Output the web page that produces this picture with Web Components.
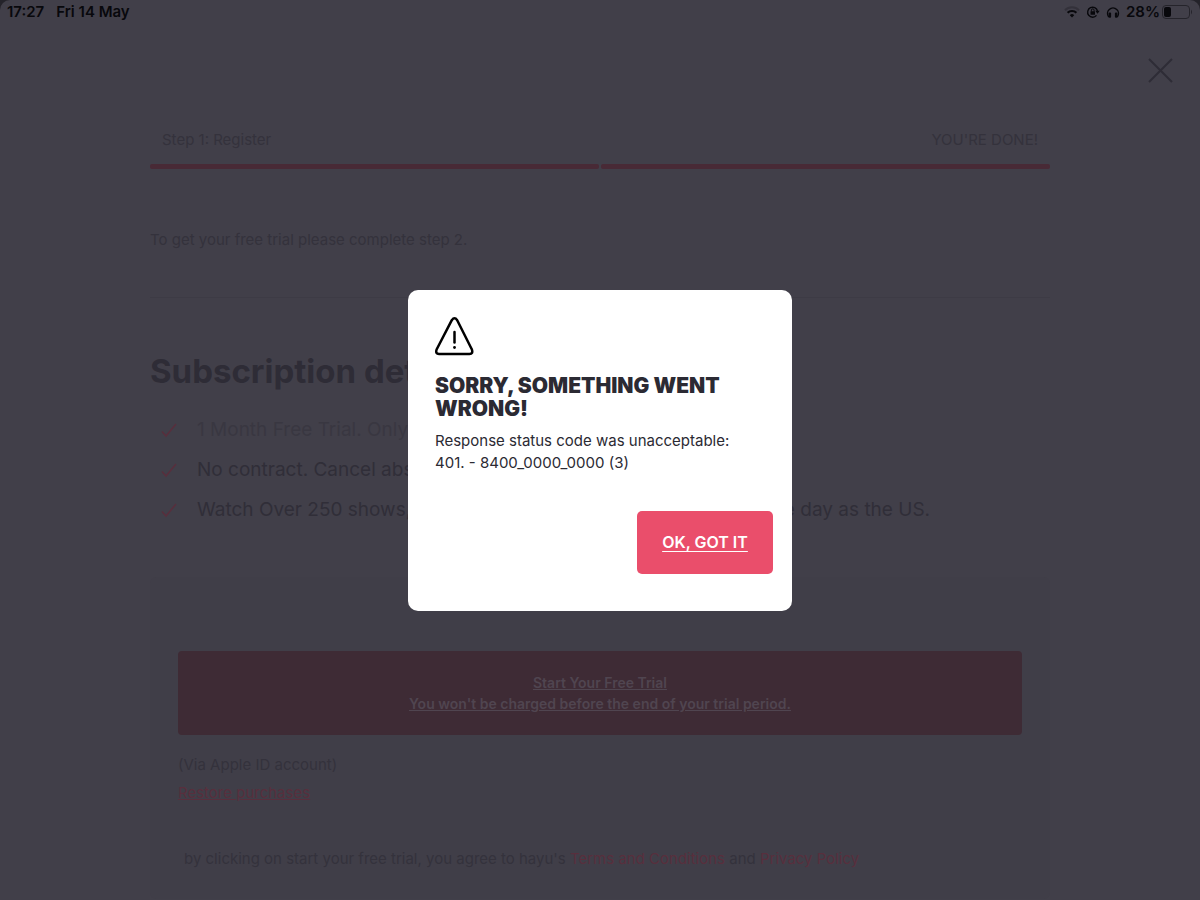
<!DOCTYPE html>
<html lang="en">
<head>
<meta charset="utf-8">
<meta name="viewport" content="width=device-width, initial-scale=1">
<title>hayu</title>
<style>
  :root {
    --page: #413f49;
    --muted: #34323c;
    --ink: #2e2c36;
    --accent: #582f3d;
    --panel: #3e2b35;
    --pink: #ea4e6b;
  }
  body {
    margin: 0;
    background: #24232a;
    color: var(--muted);
    font-family: Inter, "Liberation Sans", sans-serif;
    font-size: 15px;
    line-height: 20px;
  }
</style>
</head>
<body>
<trial-page>
  <status-bar time="17:27" date="Fri 14 May" battery="28%"></status-bar>
  <step-progress>
    <span slot="first">Step 1: Register</span>
    <span slot="last">YOU'RE DONE!</span>
  </step-progress>
  <intro-text>To get your free trial please complete step 2.</intro-text>
  <subscription-details>
    <span slot="title">Subscription details</span>
    <check-item faint>1 Month Free Trial. Only</check-item>
    <check-item>No contract. Cancel absolutely</check-item>
    <check-item>Watch Over 250 shows, with many episodes available on the same day as the US.</check-item>
  </subscription-details>
  <trial-card></trial-card>
</trial-page>
<error-dialog>
  <span slot="title">SORRY, SOMETHING WENT WRONG!</span>
  Response status code was unacceptable: 401. - 8400_0000_0000 (3)
  <span slot="action">OK, GOT IT</span>
</error-dialog>

<script>
class TrialPage extends HTMLElement {
  constructor() {
    super();
    this.attachShadow({mode: "open"}).innerHTML = `
    <style>
      :host {
        display: block;
        min-height: 100vh;
        background: var(--page);
        border-radius: 10px 10px 0 0;
      }
      .close {
        display: flex;
        justify-content: flex-end;
        padding: 32px 26px 0;
      }
      button {
        padding: 0;
        border: 0;
        background: none;
        color: var(--ink);
        line-height: 0;
      }
      main {
        width: 75%;
        margin: 46px auto 0;
      }
    </style>
    <slot name="bar"></slot>
    <div class="close">
      <button aria-label="Close">
        <svg width="28" height="28" viewBox="0 0 28 28" fill="none" stroke="currentColor" stroke-width="2">
          <path d="M3 3l23 23M26 3L3 26"/>
        </svg>
      </button>
    </div>
    <main><slot></slot></main>`;
  }

  connectedCallback() {
    this.querySelector("status-bar").slot = "bar";
  }
}

class StatusBar extends HTMLElement {
  constructor() {
    super();
    this.attachShadow({mode: "open"});
  }

  connectedCallback() {
    this.shadowRoot.innerHTML = `
    <style>
      :host {
        display: flex;
        justify-content: space-between;
        align-items: center;
        height: 24px;
        padding: 0 7px;
        color: #08080c;
        font-size: 15px;
        font-weight: 600;
      }
      div {
        display: flex;
        align-items: center;
      }
      .left { gap: 12px; }
      .right { gap: 6px; }
      .power { gap: 2px; }
    </style>
    <div class="left"><span>${this.getAttribute("time")}</span><span>${this.getAttribute("date")}</span></div>
    <div class="right">
      <svg width="16" height="12" viewBox="0 0 16 12" fill="none" stroke-width="2">
        <path d="M1 4.2a10 10 0 0 1 14 0" stroke="#33313a"/>
        <path d="M3.6 6.8a6.3 6.3 0 0 1 8.8 0" stroke="#08080c" stroke-width="2.2"/>
        <path d="M5.8 9.3a3 3 0 0 1 4.4 0L8 11.6z" fill="#08080c"/>
      </svg>
      <svg width="14" height="14" viewBox="0 0 14 14" fill="none" stroke="#08080c" stroke-width="1.4">
        <path d="M10.5 10.4A5 5 0 1 1 11.5 6"/>
        <path d="M9.3 5.8h4.4l-2.2 2.9z" fill="#08080c" stroke="none"/>
        <rect x="4.5" y="6.3" width="4.5" height="3.5" rx=".5" fill="#08080c" stroke="none"/>
        <path d="M5.4 6.5V5.2a1.35 1.35 0 0 1 2.7 0v1.3" stroke-width="1"/>
      </svg>
      <svg width="14" height="14" viewBox="0 0 14 14" fill="none" stroke="#08080c" stroke-width="1.4">
        <path d="M2.7 12A5.5 5.5 0 1 1 11.3 12"/>
        <rect x="2.5" y="7.5" width="2.6" height="5.2" rx="1" fill="#08080c" stroke="none"/>
        <rect x="8.9" y="7.5" width="2.6" height="5.2" rx="1" fill="#08080c" stroke="none"/>
      </svg>
      <div class="power">
        <span>${this.getAttribute("battery")}</span>
        <svg width="31" height="14" viewBox="0 0 31 14">
          <rect x=".5" y=".5" width="27" height="13" rx="3.5" fill="none" stroke="#25242b"/>
          <rect x="2" y="2" width="7" height="10" rx="2" fill="#08080c"/>
          <path d="M29 4.5q2 2.5 0 5z" fill="#25242b"/>
        </svg>
      </div>
    </div>`;
  }
}

class StepProgress extends HTMLElement {
  constructor() {
    super();
    this.attachShadow({mode: "open"}).innerHTML = `
    <style>
      :host { display: block; }
      .labels {
        display: flex;
        justify-content: space-between;
        padding: 0 12px;
      }
      .bars {
        display: grid;
        grid-template-columns: 1fr 1fr;
        gap: 2px;
        margin-top: 14px;
      }
      .bars i {
        height: 5px;
        border-radius: 2px;
        background: #482a36;
      }
    </style>
    <div class="labels"><slot name="first"></slot><slot name="last"></slot></div>
    <div class="bars"><i></i><i></i></div>`;
  }
}

class IntroText extends HTMLElement {
  constructor() {
    super();
    this.attachShadow({mode: "open"}).innerHTML = `
    <style>
      :host {
        display: block;
        padding: 61px 0 47px;
        border-bottom: 1px solid #3d3b45;
      }
      p { margin: 0; }
    </style>
    <p><slot></slot></p>`;
  }
}

class SubscriptionDetails extends HTMLElement {
  constructor() {
    super();
    this.attachShadow({mode: "open"}).innerHTML = `
    <style>
      :host {
        display: block;
        padding: 49px 0 47px;
      }
      h1 {
        margin: 0 0 15px;
        color: var(--ink);
        font-size: 33px;
        line-height: 48px;
      }
    </style>
    <h1><slot name="title"></slot></h1>
    <div role="list"><slot></slot></div>`;
  }
}

class CheckItem extends HTMLElement {
  constructor() {
    super();
    this.attachShadow({mode: "open"}).innerHTML = `
    <style>
      :host {
        display: flex;
        align-items: center;
        gap: 19px;
        padding-left: 10px;
        color: #302e38;
        font-size: 19px;
        line-height: 40px;
        white-space: nowrap;
      }
      :host([faint]) { color: #393741; }
      svg { flex: none; }
    </style>
    <svg width="18" height="18" viewBox="0 0 18 18" fill="none" stroke="#582f3d" stroke-width="1.6">
      <path d="M2 10.500l4 4.500L16 3"/>
    </svg>
    <span><slot></slot></span>`;
  }

  connectedCallback() {
    this.setAttribute("role", "listitem");
  }
}

class TrialCard extends HTMLElement {
  constructor() {
    super();
    this.attachShadow({mode: "open"}).innerHTML = `
    <style>
      :host {
        display: block;
        padding: 74px 28px 30px;
        border-radius: 6px;
        background: #403e48;
      }
      button {
        display: block;
        width: 100%;
        padding: 21px;
        border: 0;
        border-radius: 4px;
        background: var(--panel);
        color: #504550;
        font: inherit;
        font-size: 14px;
        font-weight: 600;
        line-height: 21px;
        text-decoration: underline;
      }
      p { margin: 0; }
      .via { margin-top: 20px; }
      .restore { margin-top: 8px; }
      .terms {
        margin-top: 46px;
        padding-left: 6px;
      }
      a {
        color: var(--accent);
        text-decoration: none;
      }
      .restore a { text-decoration: underline; }
    </style>
    <button>Start Your Free Trial<br>You won't be charged before the end of your trial period.</button>
    <p class="via">(Via Apple ID account)</p>
    <p class="restore"><a href="#">Restore purchases</a></p>
    <p class="terms">by clicking on start your free trial, you agree to hayu's <a href="#">Terms and Conditions</a> and <a href="#">Privacy Policy</a></p>`;
  }
}

class ErrorDialog extends HTMLElement {
  constructor() {
    super();
    this.attachShadow({mode: "open"}).innerHTML = `
    <style>
      :host {
        position: fixed;
        inset: 0;
        display: flex;
        align-items: center;
        justify-content: center;
      }
      section {
        box-sizing: border-box;
        width: 384px;
        padding: 27px 19px 37px 27px;
        border-radius: 10px;
        background: #fff;
        color: #2b2a33;
      }
      svg { display: block; }
      h2 {
        margin: 18px 0 10px;
        font-size: 21px;
        font-weight: 900;
        line-height: 23px;
      }
      p {
        margin: 0 0 37px;
        padding-right: 20px;
        line-height: 22px;
      }
      button {
        display: block;
        min-width: 136px;
        height: 63px;
        margin-left: auto;
        padding: 0 24px;
        border: 0;
        border-radius: 5px;
        background: var(--pink);
        color: #fff;
        font: inherit;
        font-size: 16px;
        font-weight: 600;
        text-decoration: underline;
        text-underline-offset: 3px;
      }
    </style>
    <section role="alertdialog" aria-labelledby="title">
      <svg width="39" height="39" viewBox="0 0 39 39" fill="none" stroke="#000" stroke-width="2.5" stroke-linecap="round" stroke-linejoin="round">
        <path d="M16.8 3.2Q19.500-.5 22.2 3.2L36.9 32.500Q38.3 37 34.5 37H4Q.2 37 1.6 32.500z"/>
        <path d="M19.5 15v10.500"/>
        <circle cx="19.5" cy="30.5" r="1.4" fill="#000" stroke="none"/>
      </svg>
      <h2 id="title"><slot name="title"></slot></h2>
      <p><slot></slot></p>
      <button><slot name="action"></slot></button>
    </section>`;
  }
}

customElements.define("trial-page", TrialPage);
customElements.define("status-bar", StatusBar);
customElements.define("step-progress", StepProgress);
customElements.define("intro-text", IntroText);
customElements.define("subscription-details", SubscriptionDetails);
customElements.define("check-item", CheckItem);
customElements.define("trial-card", TrialCard);
customElements.define("error-dialog", ErrorDialog);
</script>
</body>
</html>
